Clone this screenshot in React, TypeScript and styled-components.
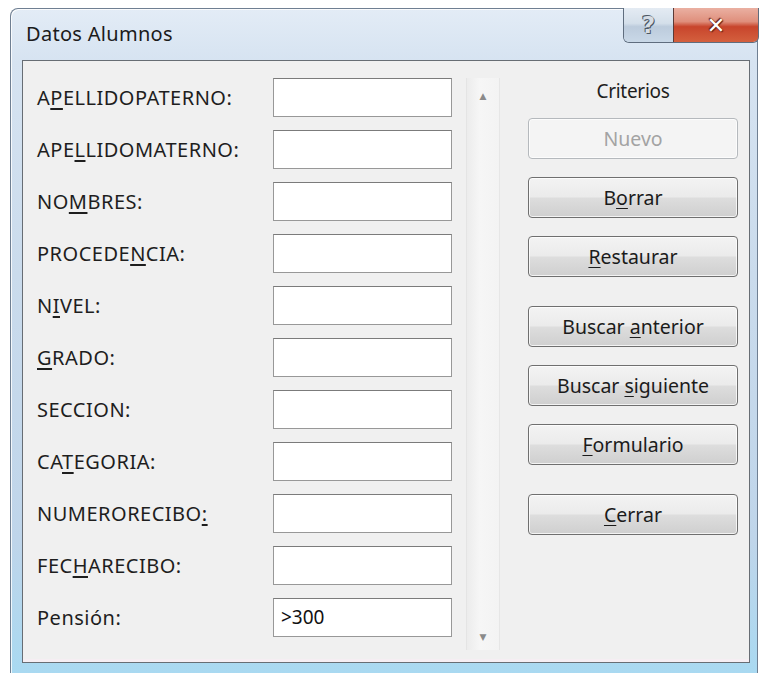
import React from "react";
import styled, { createGlobalStyle } from "styled-components";

const GlobalStyle = createGlobalStyle`
  html, body {
    margin: 0;
    padding: 0;
    background: #ffffff;
  }
  body {
    font-family: "Noto Sans", "Open Sans", "DejaVu Sans", sans-serif;
    color: #1e1e1e;
  }
`;

const Window = styled.div`
  box-sizing: border-box;
  margin: 8px 0 0 10px;
  width: 748px;
  height: 665px;
  display: flex;
  flex-direction: column;
  border: 1px solid #6f7f92;
  border-bottom: none;
  border-radius: 8px 8px 0 0;
  background: linear-gradient(
    to bottom,
    #e3ecf6 0%,
    #d6e3f1 8%,
    #cadbec 40%,
    #bfd5ea 80%,
    #a9d9f1 100%
  );
  box-shadow: inset 1px 1px 0 rgba(255, 255, 255, 0.8);
`;

const TitleBar = styled.div`
  height: 51px;
  display: flex;
  align-items: flex-start;
  justify-content: space-between;
  flex-shrink: 0;
`;

const Title = styled.span`
  margin: 11px 0 0 15px;
  font-size: 20px;
  letter-spacing: 0.3px;
  color: #1b1b1b;
`;

const CaptionButtons = styled.div`
  display: flex;
  margin: -1px -2px 0 0;
  border: 1px solid #5f6d7e;
  border-top: none;
  border-radius: 0 0 6px 6px;
  overflow: hidden;
`;

const CaptionButton = styled.div<{ $close?: boolean }>`
  height: 34px;
  width: ${(p) => (p.$close ? "84px" : "49px")};
  display: flex;
  align-items: center;
  justify-content: center;
  font-family: "DejaVu Sans", sans-serif;
  font-weight: bold;
  font-size: ${(p) => (p.$close ? "22px" : "23px")};
  border-left: ${(p) => (p.$close ? "1px solid #5b3a36" : "none")};
  background: ${(p) =>
    p.$close
      ? "linear-gradient(to bottom, #eab0a2 0%, #df8f7c 40%, #c8452c 55%, #d4603e 100%)"
      : "linear-gradient(to bottom, #e4ebf3 0%, #d4dfea 45%, #bccbdc 55%, #c9d8e7 100%)"};
  color: ${(p) => (p.$close ? "#ffffff" : "#d6dde5")};
  text-shadow: ${(p) =>
    p.$close
      ? "0 0 1px #6b1f12, 1px 1px 1px #6b1f12, -1px -1px 1px #6b1f12"
      : "0 0 1px #4e5864, 1px 1px 0 #4e5864, -1px -1px 0 #4e5864"};
`;

const ClientArea = styled.div`
  flex: 1;
  margin: 0 7px 10px 11px;
  border: 1px solid #676d74;
  background: #f0f0f0;
  display: grid;
  grid-template-columns: 443px 34px 1fr;
  box-shadow: inset 0 -3px 0 #f6eef3;
`;

const Form = styled.div`
  display: grid;
  grid-template-columns: 236px 179px;
  grid-auto-rows: 52px;
  align-items: center;
  padding: 10px 0 0 14px;
`;

const Label = styled.label`
  font-size: 20px;
  letter-spacing: 0.5px;
  color: #1e1e1e;
  white-space: nowrap;
`;

const Key = styled.span`
  text-decoration: underline;
  text-underline-offset: 3px;
`;

const Field = styled.div`
  box-sizing: border-box;
  height: 39px;
  background: #ffffff;
  border: 1px solid #989898;
  border-top-color: #7b7b7b;
  padding: 5px 7px;
  font-size: 19px;
  color: #111;
`;

const ScrollTrack = styled.div`
  margin: 17px 0 12px 0;
  display: flex;
  flex-direction: column;
  align-items: center;
  justify-content: space-between;
  padding: 13px 0 8px;
  border-left: 1px solid #e4e4e4;
  border-right: 1px solid #e6e6e6;
  background: linear-gradient(to right, #ececec, #f6f6f6 40%, #f3f3f3);
  color: #8a8a8a;
  font-size: 9px;
  font-family: "DejaVu Sans", sans-serif;
`;

const Side = styled.div`
  display: flex;
  flex-direction: column;
  padding: 20px 11px 0 28px;
`;

const SideTitle = styled.div`
  text-align: center;
  font-size: 19px;
  letter-spacing: -0.3px;
  height: 21px;
  line-height: 21px;
  margin-bottom: -2px;
`;

const Button = styled.div<{ $disabled?: boolean; $spaced?: boolean }>`
  box-sizing: border-box;
  height: 41px;
  margin-top: ${(p) => (p.$spaced ? "29px" : "18px")};
  display: flex;
  align-items: center;
  justify-content: center;
  font-size: 19.5px;
  border-radius: 4px;
  border: 1px solid ${(p) => (p.$disabled ? "#b5b9bd" : "#6f6f6f")};
  color: ${(p) => (p.$disabled ? "#a3a3a3" : "#1b1b1b")};
  background: ${(p) =>
    p.$disabled
      ? "#f4f4f4"
      : "linear-gradient(to bottom, #f3f3f3 0%, #ebebeb 48%, #dddddd 52%, #cfcfcf 100%)"};
  box-shadow: inset 0 0 0 1px rgba(255, 255, 255, 0.75);
`;

const fields: { label: React.ReactNode; value?: string }[] = [
  { label: <>A<Key>P</Key>ELLIDOPATERNO:</> },
  { label: <>APE<Key>L</Key>LIDOMATERNO:</> },
  { label: <>NO<Key>M</Key>BRES:</> },
  { label: <>PROCEDE<Key>N</Key>CIA:</> },
  { label: <>N<Key>I</Key>VEL:</> },
  { label: <><Key>G</Key>RADO:</> },
  { label: <>SECCION:</> },
  { label: <>CA<Key>T</Key>EGORIA:</> },
  { label: <>NUMERORECIBO<Key>:</Key></> },
  { label: <>FEC<Key>H</Key>ARECIBO:</> },
  { label: <>Pensión:</>, value: ">300" },
];

export default function App() {
  return (
    <>
      <GlobalStyle />
      <Window>
        <TitleBar>
          <Title>Datos Alumnos</Title>
          <CaptionButtons>
            <CaptionButton>?</CaptionButton>
            <CaptionButton $close>✕</CaptionButton>
          </CaptionButtons>
        </TitleBar>
        <ClientArea>
          <Form>
            {fields.map((f, i) => (
              <React.Fragment key={i}>
                <Label>{f.label}</Label>
                <Field>{f.value}</Field>
              </React.Fragment>
            ))}
          </Form>
          <ScrollTrack>
            <span>▲</span>
            <span>▼</span>
          </ScrollTrack>
          <Side>
            <SideTitle>Criterios</SideTitle>
            <Button $disabled><span>Nuevo</span></Button>
            <Button><span>B<Key>o</Key>rrar</span></Button>
            <Button><span><Key>R</Key>estaurar</span></Button>
            <Button $spaced><span>Buscar <Key>a</Key>nterior</span></Button>
            <Button><span>Buscar <Key>s</Key>iguiente</span></Button>
            <Button><span><Key>F</Key>ormulario</span></Button>
            <Button $spaced><span><Key>C</Key>errar</span></Button>
          </Side>
        </ClientArea>
      </Window>
    </>
  );
}
